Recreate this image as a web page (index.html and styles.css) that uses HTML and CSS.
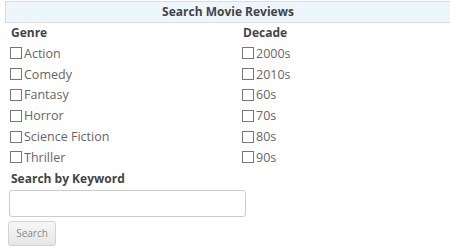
FILE: index.html
```html
<!DOCTYPE html>
<html lang="en">
<head>
  <meta charset="UTF-8" />
  <title>Search Movie Reviews</title>
  <link rel="stylesheet" href="styles.css">
</head>
<body>

  <div class="panel-title">Search Movie Reviews</div>

  <form class="search-form">
    <div class="filters">
      <div class="filter-group">
        <h3>Genre</h3>
        <label class="option"><span class="box"></span>Action</label>
        <label class="option"><span class="box"></span>Comedy</label>
        <label class="option"><span class="box"></span>Fantasy</label>
        <label class="option"><span class="box"></span>Horror</label>
        <label class="option"><span class="box"></span>Science Fiction</label>
        <label class="option"><span class="box"></span>Thriller</label>
      </div>
      <div class="filter-group">
        <h3>Decade</h3>
        <label class="option"><span class="box"></span>2000s</label>
        <label class="option"><span class="box"></span>2010s</label>
        <label class="option"><span class="box"></span>60s</label>
        <label class="option"><span class="box"></span>70s</label>
        <label class="option"><span class="box"></span>80s</label>
        <label class="option"><span class="box"></span>90s</label>
      </div>
    </div>

    <h3>Search by Keyword</h3>
    <input type="text" class="keyword">
    <button type="button" class="search-btn">Search</button>
  </form>

</body>
</html>
```

FILE: styles.css
```css
body {
  font-family: "Open Sans", sans-serif;
  color: #555;
  background: #fff;
  margin: 0;
  padding: 0;
}

.panel-title {
  margin: 1px 0 0 5px;
  height: 20px;
  line-height: 20px;
  background: #edf5fd;
  border: 1px solid #ddd;
  border-right: none;
  text-align: center;
  font-size: 12px;
  font-weight: bold;
  color: #444;
}

.search-form {
  padding: 0 0 0 9px;
}

.filters {
  display: grid;
  grid-template-columns: 232px 1fr;
}

h3 {
  margin: 0;
  padding: 0 0 0 2px;
  font-size: 12px;
  font-weight: bold;
  color: #444;
  line-height: 20px;
}

.option {
  display: flex;
  align-items: center;
  height: 20.8px;
  font-size: 12.5px;
  color: #666;
}

.box {
  width: 10px;
  height: 10px;
  border: 1px solid #777;
  margin: 0 2px 0 1px;
}

.search-form > h3 {
  margin-top: 1px;
}

.keyword {
  display: block;
  box-sizing: border-box;
  width: 237px;
  height: 27px;
  margin-top: 1px;
  border: 1px solid #ccc;
  border-radius: 3px;
}

.search-btn {
  display: block;
  margin: 4px 0 0 -1px;
  width: 48px;
  height: 25px;
  font-family: "Open Sans", sans-serif;
  font-size: 10px;
  color: #888;
  background: linear-gradient(#f7f7f7, #e6e6e6);
  border: 1px solid #d3d3d3;
  border-radius: 3px;
}
```
